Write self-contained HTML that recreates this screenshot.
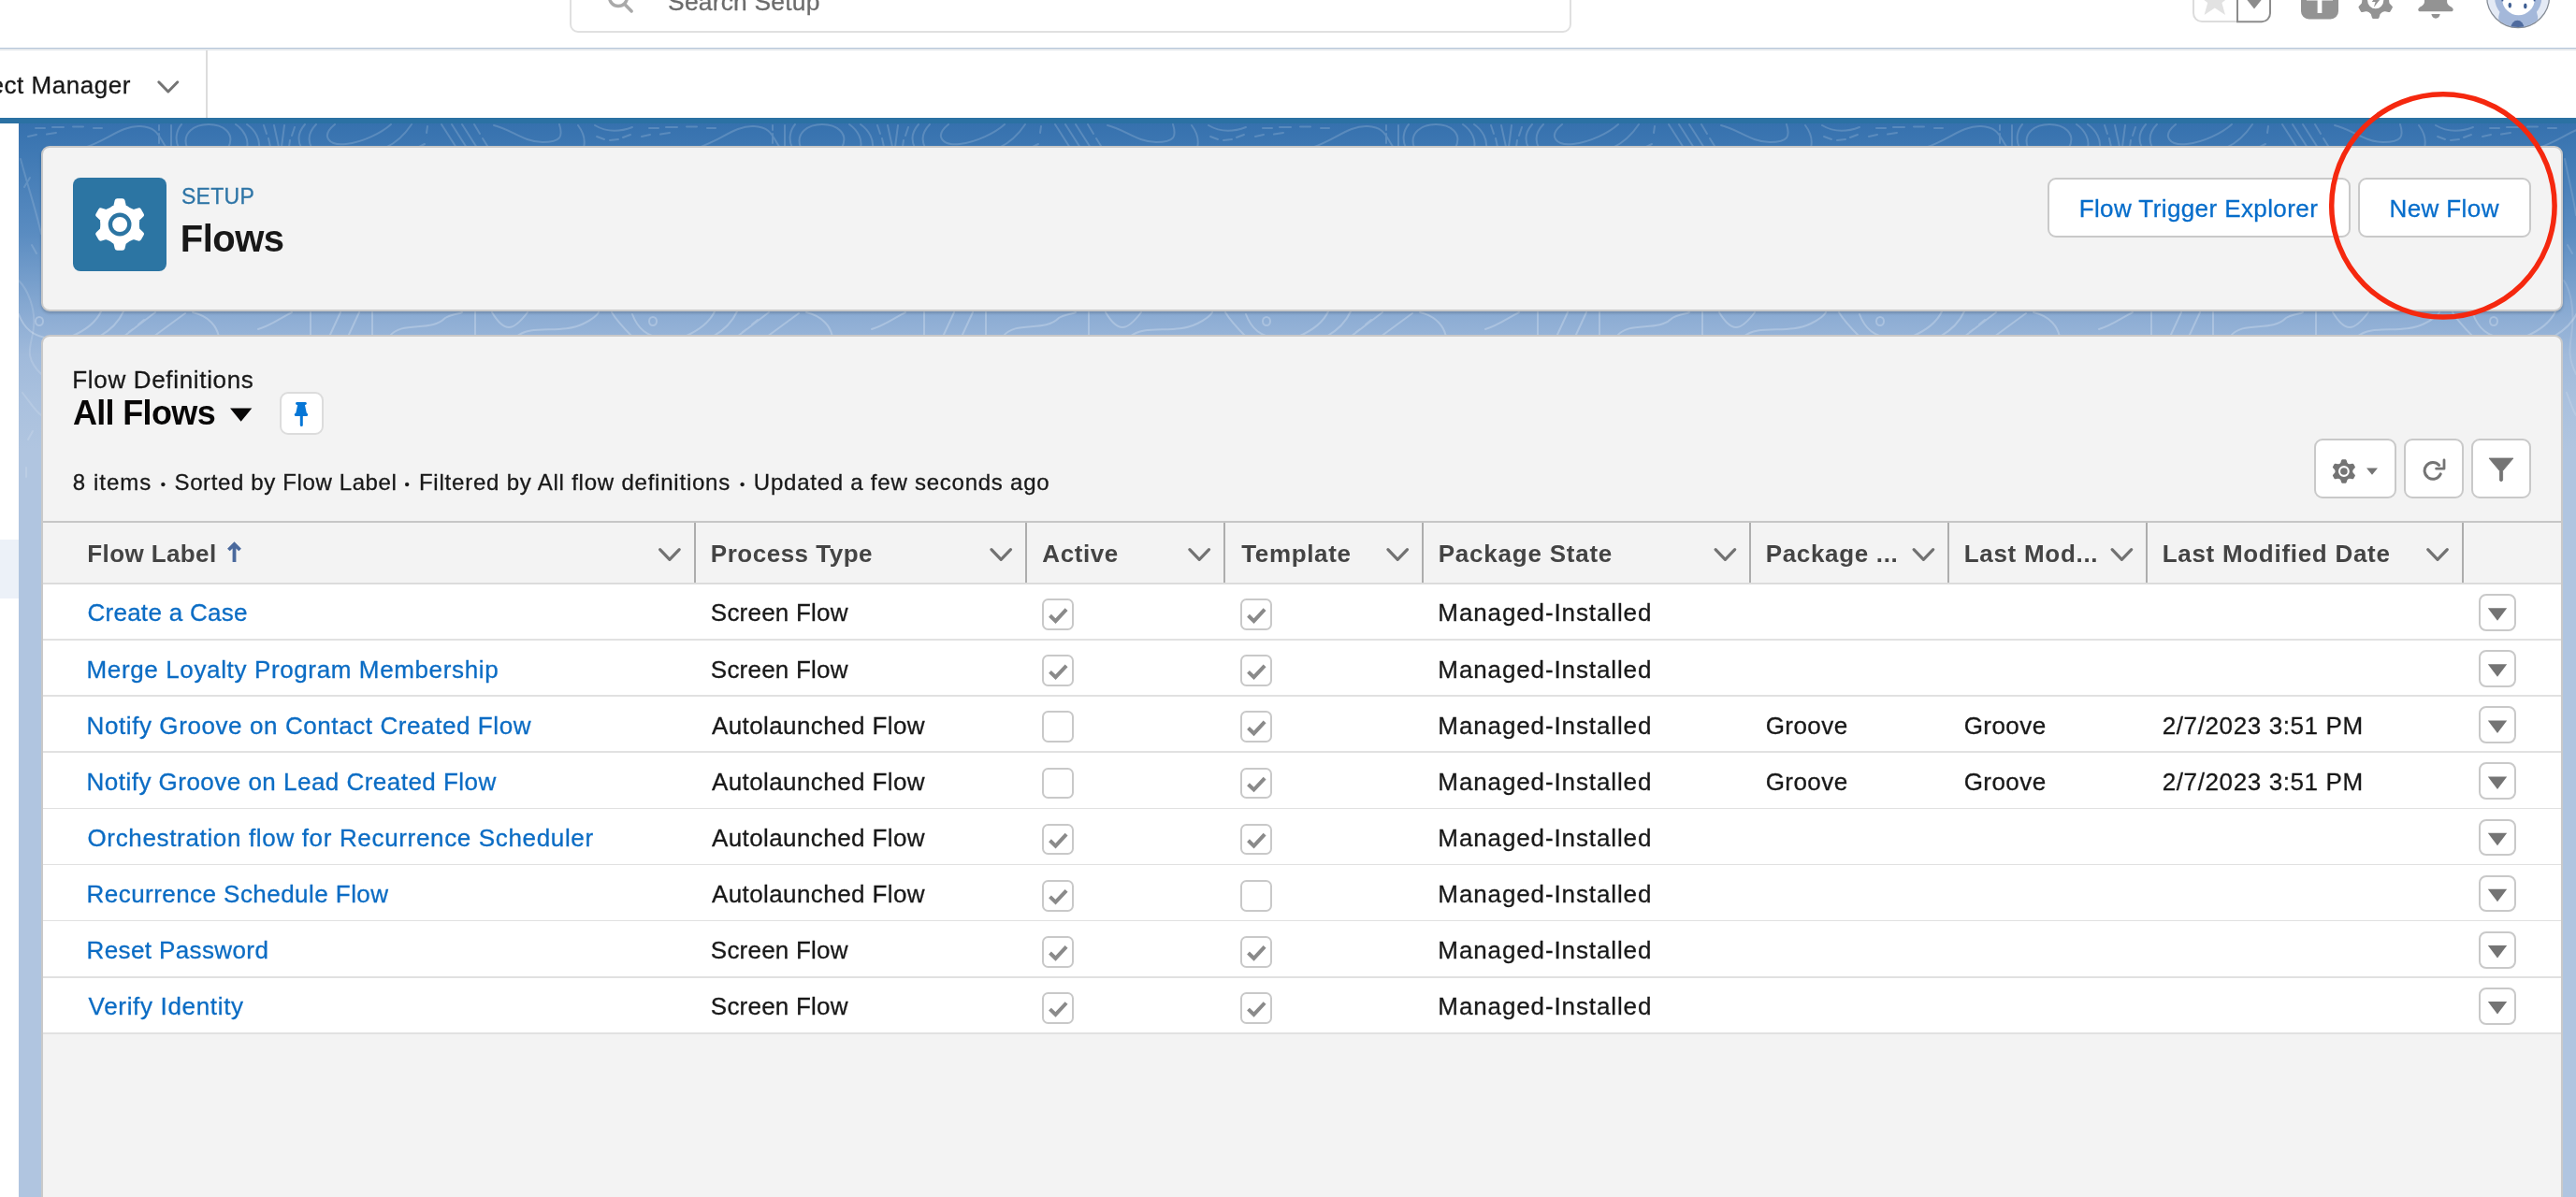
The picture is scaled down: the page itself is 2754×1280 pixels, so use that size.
<!DOCTYPE html>
<html lang="en"><head><meta charset="utf-8"><title>Flows | Salesforce</title>
<style>
html,body{margin:0;padding:0;}
body{width:2754px;height:1280px;overflow:hidden;position:relative;background:#fff;font-family:"Liberation Sans",sans-serif;}
.t{position:absolute;white-space:nowrap;line-height:1;}
.abs{position:absolute;}
svg{position:absolute;left:0;top:0;overflow:visible;}
a{color:inherit;text-decoration:none;}
</style></head><body><div id="root" style="position:absolute;left:0;top:0;width:2754px;height:1280px;will-change:transform;">

<div class="abs" style="left:0;top:126px;width:2754px;height:1154px;background:linear-gradient(to bottom,rgb(54,113,174) 0px,rgb(54,113,174) 6px,rgb(62,120,179) 34px,rgb(90,140,193) 124px,rgb(141,173,212) 214px,rgb(160,186,219) 254px,rgb(170,193,222) 304px,rgb(176,197,224) 354px,rgb(176,197,224) 100%);"></div>
<svg width="2754" height="1280" viewBox="0 0 2754 1280" style="pointer-events:none"><g fill="none" stroke="#fff" stroke-width="2" stroke-linecap="round">
<path d="M38.0,137 h10 M56.0,136 h12 M78.0,135.5 h11 M100.0,137 h9 M30.0,146 l9,-2 M50.0,143.5 l10,-1.5 M90.0,158 C115.0,150 130.0,134 150.0,135 S170.0,148 178.0,158 M170.0,134 v5 M170.0,143 v10 M183.0,134 v24 M191.0,158 C187.0,150 188.0,140 194.0,133 M200.0,158 C194.0,142 208.0,133 223.0,133 S252.0,142 244.0,158 M252.0,133 C262.0,140 266.0,150 264.0,158 M264.0,133 C274.0,140 278.0,150 277.0,158 M282.0,134 l3,9 M287.0,148 l2,9 M293.0,134 l5,23 M304.0,134 l-3,23 M315.0,136 l-3,9 M310.0,150 l-1,7 M326.0,133 C318.0,142 318.0,150 322.0,158 M338.0,133 C329.0,142 329.0,150 333.0,158 M358.0,133 C342.0,146 352.0,156 370.0,154 S408.0,142 418.0,133 M412.0,158 C425.0,152 434.0,142 440.0,133 M446.0,158 l8,-4 M456.0,142 l1,-7 M472.0,133 l16,25 M483.0,133 l16,25 M494.0,133 l16,25 M507.0,133 l6,10 M516.0,148 l5,8 M528.0,134 C546.0,138 560.0,152 580.0,152 S602.0,146 598.0,133 M618.0,134 C624.0,142 626.0,150 624.0,158 M636.0,134 C646.0,140 660.0,142 676.0,136 M638.0,146 l8,3 M652.0,150 l9,-1 M666.0,147 l8,-3" stroke-opacity="0.17"/><path d="M38.0,343.5 a4,4.6 0 1,0 8,0 a4,4.6 0 1,0 -8,0 M20.0,336 C26.0,352 36.0,360 54.0,362 M76.0,360 C94.0,352 104.0,342 108.0,333 M106.0,360 C120.0,352 128.0,342 132.0,333 M132.0,360 L166.0,334 M148.0,347 l6,-5 M138.0,355 l4,-3 M164.0,360 L198.0,335 M206.0,334 C224.0,338 232.0,350 234.0,360 M276.0,352 C290.0,348 300.0,340 312.0,334 M332.0,334 v26 M352.0,360 l12,-26 M372.0,360 l12,-26 M398.0,334 v26 M416.0,360 C430.0,342 460.0,356 476.0,340 C482.0,336 490.0,336 494.0,334 M508.0,334 v26 M526.0,334 C532.0,344 538.0,350 544.0,350 S558.0,342 564.0,334 M552.0,360 C568.0,346 600.0,358 624.0,346 C632.0,342 638.0,338 640.0,334 M654.0,334 C660.0,344 670.0,354 676.0,360" stroke-opacity="0.24"/>
<path d="M694.0,137 h10 M712.0,136 h12 M734.0,135.5 h11 M756.0,137 h9 M686.0,146 l9,-2 M706.0,143.5 l10,-1.5 M746.0,158 C771.0,150 786.0,134 806.0,135 S826.0,148 834.0,158 M826.0,134 v5 M826.0,143 v10 M839.0,134 v24 M847.0,158 C843.0,150 844.0,140 850.0,133 M856.0,158 C850.0,142 864.0,133 879.0,133 S908.0,142 900.0,158 M908.0,133 C918.0,140 922.0,150 920.0,158 M920.0,133 C930.0,140 934.0,150 933.0,158 M938.0,134 l3,9 M943.0,148 l2,9 M949.0,134 l5,23 M960.0,134 l-3,23 M971.0,136 l-3,9 M966.0,150 l-1,7 M982.0,133 C974.0,142 974.0,150 978.0,158 M994.0,133 C985.0,142 985.0,150 989.0,158 M1014.0,133 C998.0,146 1008.0,156 1026.0,154 S1064.0,142 1074.0,133 M1068.0,158 C1081.0,152 1090.0,142 1096.0,133 M1102.0,158 l8,-4 M1112.0,142 l1,-7 M1128.0,133 l16,25 M1139.0,133 l16,25 M1150.0,133 l16,25 M1163.0,133 l6,10 M1172.0,148 l5,8 M1184.0,134 C1202.0,138 1216.0,152 1236.0,152 S1258.0,146 1254.0,133 M1274.0,134 C1280.0,142 1282.0,150 1280.0,158 M1292.0,134 C1302.0,140 1316.0,142 1332.0,136 M1294.0,146 l8,3 M1308.0,150 l9,-1 M1322.0,147 l8,-3" stroke-opacity="0.17"/><path d="M694.0,343.5 a4,4.6 0 1,0 8,0 a4,4.6 0 1,0 -8,0 M676.0,336 C682.0,352 692.0,360 710.0,362 M732.0,360 C750.0,352 760.0,342 764.0,333 M762.0,360 C776.0,352 784.0,342 788.0,333 M788.0,360 L822.0,334 M804.0,347 l6,-5 M794.0,355 l4,-3 M820.0,360 L854.0,335 M862.0,334 C880.0,338 888.0,350 890.0,360 M932.0,352 C946.0,348 956.0,340 968.0,334 M988.0,334 v26 M1008.0,360 l12,-26 M1028.0,360 l12,-26 M1054.0,334 v26 M1072.0,360 C1086.0,342 1116.0,356 1132.0,340 C1138.0,336 1146.0,336 1150.0,334 M1164.0,334 v26 M1182.0,334 C1188.0,344 1194.0,350 1200.0,350 S1214.0,342 1220.0,334 M1208.0,360 C1224.0,346 1256.0,358 1280.0,346 C1288.0,342 1294.0,338 1296.0,334 M1310.0,334 C1316.0,344 1326.0,354 1332.0,360" stroke-opacity="0.24"/>
<path d="M1350.0,137 h10 M1368.0,136 h12 M1390.0,135.5 h11 M1412.0,137 h9 M1342.0,146 l9,-2 M1362.0,143.5 l10,-1.5 M1402.0,158 C1427.0,150 1442.0,134 1462.0,135 S1482.0,148 1490.0,158 M1482.0,134 v5 M1482.0,143 v10 M1495.0,134 v24 M1503.0,158 C1499.0,150 1500.0,140 1506.0,133 M1512.0,158 C1506.0,142 1520.0,133 1535.0,133 S1564.0,142 1556.0,158 M1564.0,133 C1574.0,140 1578.0,150 1576.0,158 M1576.0,133 C1586.0,140 1590.0,150 1589.0,158 M1594.0,134 l3,9 M1599.0,148 l2,9 M1605.0,134 l5,23 M1616.0,134 l-3,23 M1627.0,136 l-3,9 M1622.0,150 l-1,7 M1638.0,133 C1630.0,142 1630.0,150 1634.0,158 M1650.0,133 C1641.0,142 1641.0,150 1645.0,158 M1670.0,133 C1654.0,146 1664.0,156 1682.0,154 S1720.0,142 1730.0,133 M1724.0,158 C1737.0,152 1746.0,142 1752.0,133 M1758.0,158 l8,-4 M1768.0,142 l1,-7 M1784.0,133 l16,25 M1795.0,133 l16,25 M1806.0,133 l16,25 M1819.0,133 l6,10 M1828.0,148 l5,8 M1840.0,134 C1858.0,138 1872.0,152 1892.0,152 S1914.0,146 1910.0,133 M1930.0,134 C1936.0,142 1938.0,150 1936.0,158 M1948.0,134 C1958.0,140 1972.0,142 1988.0,136 M1950.0,146 l8,3 M1964.0,150 l9,-1 M1978.0,147 l8,-3" stroke-opacity="0.17"/><path d="M1350.0,343.5 a4,4.6 0 1,0 8,0 a4,4.6 0 1,0 -8,0 M1332.0,336 C1338.0,352 1348.0,360 1366.0,362 M1388.0,360 C1406.0,352 1416.0,342 1420.0,333 M1418.0,360 C1432.0,352 1440.0,342 1444.0,333 M1444.0,360 L1478.0,334 M1460.0,347 l6,-5 M1450.0,355 l4,-3 M1476.0,360 L1510.0,335 M1518.0,334 C1536.0,338 1544.0,350 1546.0,360 M1588.0,352 C1602.0,348 1612.0,340 1624.0,334 M1644.0,334 v26 M1664.0,360 l12,-26 M1684.0,360 l12,-26 M1710.0,334 v26 M1728.0,360 C1742.0,342 1772.0,356 1788.0,340 C1794.0,336 1802.0,336 1806.0,334 M1820.0,334 v26 M1838.0,334 C1844.0,344 1850.0,350 1856.0,350 S1870.0,342 1876.0,334 M1864.0,360 C1880.0,346 1912.0,358 1936.0,346 C1944.0,342 1950.0,338 1952.0,334 M1966.0,334 C1972.0,344 1982.0,354 1988.0,360" stroke-opacity="0.24"/>
<path d="M2006.0,137 h10 M2024.0,136 h12 M2046.0,135.5 h11 M2068.0,137 h9 M1998.0,146 l9,-2 M2018.0,143.5 l10,-1.5 M2058.0,158 C2083.0,150 2098.0,134 2118.0,135 S2138.0,148 2146.0,158 M2138.0,134 v5 M2138.0,143 v10 M2151.0,134 v24 M2159.0,158 C2155.0,150 2156.0,140 2162.0,133 M2168.0,158 C2162.0,142 2176.0,133 2191.0,133 S2220.0,142 2212.0,158 M2220.0,133 C2230.0,140 2234.0,150 2232.0,158 M2232.0,133 C2242.0,140 2246.0,150 2245.0,158 M2250.0,134 l3,9 M2255.0,148 l2,9 M2261.0,134 l5,23 M2272.0,134 l-3,23 M2283.0,136 l-3,9 M2278.0,150 l-1,7 M2294.0,133 C2286.0,142 2286.0,150 2290.0,158 M2306.0,133 C2297.0,142 2297.0,150 2301.0,158 M2326.0,133 C2310.0,146 2320.0,156 2338.0,154 S2376.0,142 2386.0,133 M2380.0,158 C2393.0,152 2402.0,142 2408.0,133 M2414.0,158 l8,-4 M2424.0,142 l1,-7 M2440.0,133 l16,25 M2451.0,133 l16,25 M2462.0,133 l16,25 M2475.0,133 l6,10 M2484.0,148 l5,8 M2496.0,134 C2514.0,138 2528.0,152 2548.0,152 S2570.0,146 2566.0,133 M2586.0,134 C2592.0,142 2594.0,150 2592.0,158 M2604.0,134 C2614.0,140 2628.0,142 2644.0,136 M2606.0,146 l8,3 M2620.0,150 l9,-1 M2634.0,147 l8,-3" stroke-opacity="0.17"/><path d="M2006.0,343.5 a4,4.6 0 1,0 8,0 a4,4.6 0 1,0 -8,0 M1988.0,336 C1994.0,352 2004.0,360 2022.0,362 M2044.0,360 C2062.0,352 2072.0,342 2076.0,333 M2074.0,360 C2088.0,352 2096.0,342 2100.0,333 M2100.0,360 L2134.0,334 M2116.0,347 l6,-5 M2106.0,355 l4,-3 M2132.0,360 L2166.0,335 M2174.0,334 C2192.0,338 2200.0,350 2202.0,360 M2244.0,352 C2258.0,348 2268.0,340 2280.0,334 M2300.0,334 v26 M2320.0,360 l12,-26 M2340.0,360 l12,-26 M2366.0,334 v26 M2384.0,360 C2398.0,342 2428.0,356 2444.0,340 C2450.0,336 2458.0,336 2462.0,334 M2476.0,334 v26 M2494.0,334 C2500.0,344 2506.0,350 2512.0,350 S2526.0,342 2532.0,334 M2520.0,360 C2536.0,346 2568.0,358 2592.0,346 C2600.0,342 2606.0,338 2608.0,334 M2622.0,334 C2628.0,344 2638.0,354 2644.0,360" stroke-opacity="0.24"/>
<path d="M2662.0,137 h10 M2680.0,136 h12 M2702.0,135.5 h11 M2724.0,137 h9 M2654.0,146 l9,-2 M2674.0,143.5 l10,-1.5 M2714.0,158 C2739.0,150 2754.0,134 2774.0,135 S2794.0,148 2802.0,158 M2794.0,134 v5 M2794.0,143 v10 M2807.0,134 v24 M2815.0,158 C2811.0,150 2812.0,140 2818.0,133 M2824.0,158 C2818.0,142 2832.0,133 2847.0,133 S2876.0,142 2868.0,158 M2876.0,133 C2886.0,140 2890.0,150 2888.0,158 M2888.0,133 C2898.0,140 2902.0,150 2901.0,158 M2906.0,134 l3,9 M2911.0,148 l2,9 M2917.0,134 l5,23 M2928.0,134 l-3,23 M2939.0,136 l-3,9 M2934.0,150 l-1,7 M2950.0,133 C2942.0,142 2942.0,150 2946.0,158 M2962.0,133 C2953.0,142 2953.0,150 2957.0,158 M2982.0,133 C2966.0,146 2976.0,156 2994.0,154 S3032.0,142 3042.0,133 M3036.0,158 C3049.0,152 3058.0,142 3064.0,133 M3070.0,158 l8,-4 M3080.0,142 l1,-7 M3096.0,133 l16,25 M3107.0,133 l16,25 M3118.0,133 l16,25 M3131.0,133 l6,10 M3140.0,148 l5,8 M3152.0,134 C3170.0,138 3184.0,152 3204.0,152 S3226.0,146 3222.0,133 M3242.0,134 C3248.0,142 3250.0,150 3248.0,158 M3260.0,134 C3270.0,140 3284.0,142 3300.0,136 M3262.0,146 l8,3 M3276.0,150 l9,-1 M3290.0,147 l8,-3" stroke-opacity="0.17"/><path d="M2662.0,343.5 a4,4.6 0 1,0 8,0 a4,4.6 0 1,0 -8,0 M2644.0,336 C2650.0,352 2660.0,360 2678.0,362 M2700.0,360 C2718.0,352 2728.0,342 2732.0,333 M2730.0,360 C2744.0,352 2752.0,342 2756.0,333 M2756.0,360 L2790.0,334 M2772.0,347 l6,-5 M2762.0,355 l4,-3 M2788.0,360 L2822.0,335 M2830.0,334 C2848.0,338 2856.0,350 2858.0,360 M2900.0,352 C2914.0,348 2924.0,340 2936.0,334 M2956.0,334 v26 M2976.0,360 l12,-26 M2996.0,360 l12,-26 M3022.0,334 v26 M3040.0,360 C3054.0,342 3084.0,356 3100.0,340 C3106.0,336 3114.0,336 3118.0,334 M3132.0,334 v26 M3150.0,334 C3156.0,344 3162.0,350 3168.0,350 S3182.0,342 3188.0,334 M3176.0,360 C3192.0,346 3224.0,358 3248.0,346 C3256.0,342 3262.0,338 3264.0,334 M3278.0,334 C3284.0,344 3294.0,354 3300.0,360" stroke-opacity="0.24"/>
<path d="M22,170 C30,200 40,230 44,250 M20,300 C30,310 38,330 36,350 S24,380 44,400 M26,200 l6,-10 M34,262 l5,9 M24,420 C32,430 38,440 44,444 M30,470 l5,-9 M28,500 v10" stroke-opacity="0.14"/>
<path d="M2742,170 C2748,200 2752,215 2754,230 M2741,300 C2748,310 2752,330 2750,350 S2744,380 2754,400 M2745,262 l5,9 M2744,420 C2748,430 2751,440 2754,444" stroke-opacity="0.14"/>
</g></svg>
<div class="" style="position:absolute;left:0.00px;top:126.00px;width:2754.00px;height:6.00px;background:#2b71a3;"></div>
<div class="" style="position:absolute;left:0.00px;top:132.00px;width:20.30px;height:1148.00px;background:#fff;"></div>
<div class="" style="position:absolute;left:0.00px;top:577.00px;width:20.30px;height:62.50px;background:#ecf1f8;"></div>
<div class="" style="position:absolute;left:0.00px;top:0.00px;width:2754.00px;height:51.00px;background:#fff;"></div>
<div class="" style="position:absolute;left:608.70px;top:-40.00px;width:1071.10px;height:75.20px;box-sizing:border-box;border:2px solid #e0e0e0;border-radius:9px;background:#fff;"></div>
<svg width="2754" height="60" viewBox="0 0 2754 60"><g fill="none" stroke="#a9a9a9" stroke-width="3.4" stroke-linecap="round"><circle cx="661" cy="-3" r="9.5"/><path d="M667.6,4.2 L675.2,12"/></g></svg>
<div class="t " style="left:714.10px;top:-11.35px;font-size:26.4px;color:#6c6c6c;-webkit-text-stroke:0.3px;letter-spacing:0.212px;">Search Setup</div>
<div class="" style="position:absolute;left:0.00px;top:50.70px;width:2754.00px;height:1.50px;background:#b3c5d8;"></div>
<div class="" style="position:absolute;left:0.00px;top:52.20px;width:2754.00px;height:1.60px;background:#e4e8ec;"></div>
<svg width="2754" height="60" viewBox="0 0 2754 60">
<path d="M2345,-10 V14 a9,9 0 0 0 9,9 H2392" fill="none" stroke="#dcdcdc" stroke-width="2"/>
<path d="M2392,-10 V23.3 H2418 a9,9 0 0 0 9,-9 V-10" fill="#fff" stroke="#8c8c8c" stroke-width="2"/>
<path d="M2367.8,-18.4 L2363.1,-5.9 L2349.7,-5.3 L2360.2,3.1 L2356.6,16.0 L2367.8,8.6 L2379.0,16.0 L2375.4,3.1 L2385.9,-5.3 L2372.5,-5.9Z" fill="#e2e2e2"/>
<path d="M2400,-3 H2420 L2410,9.5 Z" fill="#8c8c8c"/>
<path d="M2460,-20 V12 a8.5,8.5 0 0 0 8.5,8.5 H2491.5 a8.5,8.5 0 0 0 8.5,-8.5 V-20Z" fill="#939393"/>
<path d="M2477.6,-10 h4.8 v24 h-4.8z" fill="#fff"/><path d="M2466,-4 h28 v4.5 h-28z" fill="#fff"/>
<path d="M2536.33,-12.78 L2537.60,-17.08 L2541.80,-17.08 L2543.07,-12.78 Q2545.66,-9.73 2549.61,-9.01 L2553.96,-10.05 L2556.06,-6.42 L2552.97,-3.18 Q2551.63,0.60 2552.97,4.38 L2556.06,7.62 L2553.96,11.25 L2549.61,10.21 Q2545.66,10.93 2543.07,13.98 L2541.80,18.28 L2537.60,18.28 L2536.33,13.98 Q2533.74,10.93 2529.79,10.21 L2525.44,11.25 L2523.34,7.62 L2526.43,4.38 Q2527.77,0.60 2526.43,-3.18 L2523.34,-6.42 L2525.44,-10.05 L2529.79,-9.01 Q2533.74,-9.73 2536.33,-12.78Z" fill="#939393" stroke="#939393" stroke-width="3.6" stroke-linejoin="round"/><circle cx="2539.7" cy="0.6" r="8.6" fill="#fff"/>
<path d="M2542,-7 L2535.8,2 H2539.6 L2537.8,8 L2544.4,-0.5 H2540.6Z" fill="#939393"/>
<path d="M2592,-12 V1.5 C2592,5.6 2588.4,6.6 2586.4,8.2 C2584.4,9.8 2585.2,12.3 2587.6,12.3 H2620.4 C2622.8,12.3 2623.6,9.8 2621.6,8.2 C2619.6,6.6 2616.1,5.6 2616.1,1.5 V-12Z" fill="#939393"/>
<path d="M2599.4,15.1 H2608.7 C2608.2,18 2606.3,19.7 2604,19.7 C2601.7,19.7 2599.9,18 2599.4,15.1Z" fill="#939393"/>
<defs><clipPath id="av"><circle cx="2692.1" cy="-4" r="33"/></clipPath></defs>
<circle cx="2692.1" cy="-4" r="33.5" fill="#e4eaf5" stroke="#858c96" stroke-width="1.3"/>
<g clip-path="url(#av)"><circle cx="2692.2" cy="-3" r="25.2" fill="#a4b8da"/><path d="M2673.5,9 L2671.2,18 L2672,31 H2712.4 L2713.2,18 L2711,9Z" fill="#a4b8da"/>
<ellipse cx="2692.5" cy="-1.2" rx="17.4" ry="17.4" fill="#fff"/>
<path d="M2675.2,1.4 A17.4,17.4 0 0 1 2709.8,1.4" fill="none" stroke="#3f5c92" stroke-width="1.8"/>
<ellipse cx="2683.3" cy="5.6" rx="1.75" ry="2.8" fill="#3f5f93"/><ellipse cx="2699.8" cy="6.4" rx="1.75" ry="2.8" fill="#3f5f93"/>
<ellipse cx="2691.4" cy="30" rx="7" ry="8.3" fill="#4f6b9e"/></g>
</svg>
<div class="" style="position:absolute;left:0.00px;top:53.80px;width:2754.00px;height:72.20px;background:#fff;"></div>
<div class="t" style="left:-52.59px;top:77.59px;font-size:26px;color:#181818;letter-spacing:0.541px;-webkit-text-stroke:0.3px;">Object Manager</div>
<svg width="2754" height="130" viewBox="0 0 2754 130"><path d="M169.8,87.8 L179.8,98 L189.8,87.8" fill="none" stroke="#747474" stroke-width="3" stroke-linecap="round" stroke-linejoin="round"/></svg>
<div class="" style="position:absolute;left:220.30px;top:53.80px;width:1.50px;height:72.20px;background:#dcdcdc;"></div>
<div class="" style="position:absolute;left:44.20px;top:156.30px;width:2696.00px;height:176.90px;box-sizing:border-box;background:#f3f3f3;border:2px solid #c9c9c9;border-radius:9px;box-shadow:0 2px 3px rgba(0,0,0,0.18);"></div>
<div class="" style="position:absolute;left:78.10px;top:190.10px;width:100.00px;height:100.00px;background:#2c75a3;border-radius:8px;"></div>
<svg width="2754" height="1280" viewBox="0 0 2754 1280"><path d="M124.03,220.83 L125.41,214.94 L130.79,214.94 L132.17,220.83 Q136.78,224.97 142.67,226.89 L148.45,225.14 L151.15,229.81 L146.74,233.94 Q145.46,240.00 146.74,246.06 L151.15,250.19 L148.45,254.86 L142.67,253.11 Q136.78,255.03 132.17,259.17 L130.79,265.06 L125.41,265.06 L124.03,259.17 Q119.42,255.03 113.53,253.11 L107.75,254.86 L105.05,250.19 L109.46,246.06 Q110.74,240.00 109.46,233.94 L105.05,229.81 L107.75,225.14 L113.53,226.89 Q119.42,224.97 124.03,220.83Z" fill="#fff" stroke="#fff" stroke-width="5.6" stroke-linejoin="round"/><circle cx="128.1" cy="240" r="10.2" fill="none" stroke="#2c75a3" stroke-width="4.4"/></svg>
<div class="t " style="left:193.96px;top:199.03px;font-size:23px;color:#2d74a6;-webkit-text-stroke:0.3px;letter-spacing:0.294px;">SETUP</div>
<div class="t " style="left:192.72px;top:235.14px;font-size:40px;color:#181818;font-weight:bold;letter-spacing:-0.506px;">Flows</div>
<div class="" style="position:absolute;left:2188.70px;top:190.00px;width:324.10px;height:64.00px;box-sizing:border-box;background:#fff;border:2px solid #c9c9c9;border-radius:9px;"></div>
<div class="" style="position:absolute;left:2520.70px;top:190.00px;width:185.40px;height:64.00px;box-sizing:border-box;background:#fff;border:2px solid #c9c9c9;border-radius:9px;"></div>
<div class="t " style="left:2222.67px;top:209.79px;font-size:26px;color:#066dcb;-webkit-text-stroke:0.3px;letter-spacing:0.403px;">Flow Trigger Explorer</div>
<div class="t " style="left:2554.47px;top:209.79px;font-size:26px;color:#066dcb;-webkit-text-stroke:0.3px;letter-spacing:0.405px;">New Flow</div>
<div class="" style="position:absolute;left:44.20px;top:358.20px;width:2696.00px;height:941.80px;box-sizing:border-box;background:#f3f3f3;border:2px solid #c9c9c9;border-radius:9px;"></div>
<div class="t " style="left:77.27px;top:392.69px;font-size:26px;color:#181818;-webkit-text-stroke:0.3px;letter-spacing:0.671px;">Flow Definitions</div>
<div class="t " style="left:77.90px;top:423.53px;font-size:36px;color:#080707;font-weight:bold;letter-spacing:-0.655px;">All Flows</div>
<svg width="2754" height="1280" viewBox="0 0 2754 1280">
<path d="M246,436.5 H269.3 L257.65,450.8Z" fill="#080707"/>
</svg>
<div class="" style="position:absolute;left:298.60px;top:418.50px;width:47.00px;height:46.60px;box-sizing:border-box;background:#fff;border:2px solid #dcdcdc;border-radius:9px;"></div>
<svg width="2754" height="1280" viewBox="0 0 2754 1280"><g fill="#0676d6">
<rect x="316.1" y="430" width="11.7" height="3" rx="1.4"/>
<path d="M318.3,432.4 H325.8 L328,442.4 H316.1Z"/>
<rect x="314.8" y="441.8" width="14.3" height="3.1" rx="1.5"/>
<rect x="320.8" y="444" width="3" height="11.9" rx="1.5"/>
</g></svg>
<div class="t " style="left:77.86px;top:503.88px;font-size:24px;color:#181818;-webkit-text-stroke:0.3px;letter-spacing:1.026px;">8 items</div>
<div class="t " style="left:186.51px;top:503.88px;font-size:24px;color:#181818;-webkit-text-stroke:0.3px;letter-spacing:0.628px;">Sorted by Flow Label</div>
<div class="t " style="left:447.93px;top:503.88px;font-size:24px;color:#181818;-webkit-text-stroke:0.3px;letter-spacing:0.780px;">Filtered by All flow definitions</div>
<div class="t " style="left:805.85px;top:503.88px;font-size:24px;color:#181818;-webkit-text-stroke:0.3px;letter-spacing:0.759px;">Updated a few seconds ago</div>
<div class="t " style="left:171.71px;top:509.90px;font-size:15px;color:#181818;-webkit-text-stroke:0.3px;">•</div>
<div class="t " style="left:432.61px;top:509.90px;font-size:15px;color:#181818;-webkit-text-stroke:0.3px;">•</div>
<div class="t " style="left:790.91px;top:509.90px;font-size:15px;color:#181818;-webkit-text-stroke:0.3px;">•</div>
<div class="" style="position:absolute;left:2473.90px;top:468.90px;width:88.10px;height:64.20px;box-sizing:border-box;background:#fff;border:2px solid #c9c9c9;border-radius:9px;"></div>
<div class="" style="position:absolute;left:2569.90px;top:468.90px;width:63.70px;height:64.20px;box-sizing:border-box;background:#fff;border:2px solid #c9c9c9;border-radius:9px;"></div>
<div class="" style="position:absolute;left:2641.60px;top:468.90px;width:64.60px;height:64.20px;box-sizing:border-box;background:#fff;border:2px solid #c9c9c9;border-radius:9px;"></div>
<svg width="2754" height="1280" viewBox="0 0 2754 1280">
<path d="M2503.43,495.24 L2504.40,492.40 L2507.40,492.40 L2508.37,495.24 Q2509.59,497.61 2512.25,497.48 L2515.20,496.90 L2516.70,499.49 L2514.72,501.76 Q2513.28,504.00 2514.72,506.24 L2516.70,508.51 L2515.20,511.10 L2512.25,510.52 Q2509.59,510.39 2508.37,512.76 L2507.40,515.60 L2504.40,515.60 L2503.43,512.76 Q2502.21,510.39 2499.55,510.52 L2496.60,511.10 L2495.10,508.51 L2497.08,506.24 Q2498.52,504.00 2497.08,501.76 L2495.10,499.49 L2496.60,496.90 L2499.55,497.48 Q2502.21,497.61 2503.43,495.24Z" fill="#747474" stroke="#747474" stroke-width="2.4" stroke-linejoin="round"/><circle cx="2505.9" cy="504" r="4.85" fill="none" stroke="#fff" stroke-width="2.1"/>
<path d="M2530,500.4 H2542 L2536,507.8Z" fill="#747474"/>
<path d="M2607.6,497.4 A8.9,8.9 0 1 0 2609.2,506.9" fill="none" stroke="#747474" stroke-width="3" stroke-linecap="round"/>
<path d="M2613,492 V501.2 H2604.6" fill="none" stroke="#747474" stroke-width="2.8" stroke-linecap="round" stroke-linejoin="round"/>
<path d="M2661,490 H2687 L2675.6,503.6 V513 a1.6,1.6 0 0 1 -3.2,0 V503.6Z" fill="#747474" stroke="#747474" stroke-width="0.8" stroke-linejoin="round"/>
</svg>
<div class="" style="position:absolute;left:46.20px;top:557.00px;width:2692.00px;height:2.00px;background:#c6c6c6;"></div>
<div class="" style="position:absolute;left:46.20px;top:559.00px;width:2692.00px;height:64.40px;background:#f3f3f3;"></div>
<div class="" style="position:absolute;left:46.20px;top:623.40px;width:2692.00px;height:481.28px;background:#fff;"></div>
<div class="" style="position:absolute;left:46.20px;top:623.30px;width:2692.00px;height:1.70px;background:#dcdcdc;"></div>
<div class="" style="position:absolute;left:46.20px;top:683.36px;width:2692.00px;height:1.80px;background:#e1e1e1;"></div>
<div class="" style="position:absolute;left:46.20px;top:743.42px;width:2692.00px;height:1.80px;background:#e1e1e1;"></div>
<div class="" style="position:absolute;left:46.20px;top:803.48px;width:2692.00px;height:1.80px;background:#e1e1e1;"></div>
<div class="" style="position:absolute;left:46.20px;top:863.54px;width:2692.00px;height:1.80px;background:#e1e1e1;"></div>
<div class="" style="position:absolute;left:46.20px;top:923.60px;width:2692.00px;height:1.80px;background:#e1e1e1;"></div>
<div class="" style="position:absolute;left:46.20px;top:983.66px;width:2692.00px;height:1.80px;background:#e1e1e1;"></div>
<div class="" style="position:absolute;left:46.20px;top:1043.72px;width:2692.00px;height:1.80px;background:#e1e1e1;"></div>
<div class="" style="position:absolute;left:46.20px;top:1103.78px;width:2692.00px;height:1.80px;background:#e1e1e1;"></div>
<div class="" style="position:absolute;left:741.80px;top:559.00px;width:1.80px;height:64.00px;background:#adadad;"></div>
<div class="" style="position:absolute;left:1096.10px;top:559.00px;width:1.80px;height:64.00px;background:#adadad;"></div>
<div class="" style="position:absolute;left:1308.10px;top:559.00px;width:1.80px;height:64.00px;background:#adadad;"></div>
<div class="" style="position:absolute;left:1520.10px;top:559.00px;width:1.80px;height:64.00px;background:#adadad;"></div>
<div class="" style="position:absolute;left:1870.30px;top:559.00px;width:1.80px;height:64.00px;background:#adadad;"></div>
<div class="" style="position:absolute;left:2082.30px;top:559.00px;width:1.80px;height:64.00px;background:#adadad;"></div>
<div class="" style="position:absolute;left:2294.30px;top:559.00px;width:1.80px;height:64.00px;background:#adadad;"></div>
<div class="" style="position:absolute;left:2631.90px;top:559.00px;width:1.80px;height:64.00px;background:#adadad;"></div>
<div class="t " style="left:93.36px;top:578.69px;font-size:26px;color:#444444;font-weight:bold;letter-spacing:0.382px;">Flow Label</div>
<div class="t " style="left:759.86px;top:578.69px;font-size:26px;color:#444444;font-weight:bold;letter-spacing:0.504px;">Process Type</div>
<div class="t " style="left:1114.35px;top:578.69px;font-size:26px;color:#444444;font-weight:bold;letter-spacing:0.560px;">Active</div>
<div class="t " style="left:1327.21px;top:578.69px;font-size:26px;color:#444444;font-weight:bold;letter-spacing:0.648px;">Template</div>
<div class="t " style="left:1537.76px;top:578.69px;font-size:26px;color:#444444;font-weight:bold;letter-spacing:0.767px;">Package State</div>
<div class="t " style="left:1887.76px;top:578.69px;font-size:26px;color:#444444;font-weight:bold;letter-spacing:0.661px;">Package ...</div>
<div class="t " style="left:2099.66px;top:578.69px;font-size:26px;color:#444444;font-weight:bold;letter-spacing:0.715px;">Last Mod...</div>
<div class="t " style="left:2311.66px;top:578.69px;font-size:26px;color:#444444;font-weight:bold;letter-spacing:0.712px;">Last Modified Date</div>
<svg width="2754" height="1280" viewBox="0 0 2754 1280">
<path d="M250.5,600.9 V583 M244.4,588.0 L250.5,581.9 L256.6,588.0" fill="none" stroke="#4a699d" stroke-width="3.8" stroke-linecap="butt" stroke-linejoin="miter"/>
<path d="M705.6,587.6 L715.9,598.4 L726.2,587.6" fill="none" stroke="#727272" stroke-width="3.2" stroke-linecap="round" stroke-linejoin="round"/>
<path d="M1059.9,587.6 L1070.2,598.4 L1080.5,587.6" fill="none" stroke="#727272" stroke-width="3.2" stroke-linecap="round" stroke-linejoin="round"/>
<path d="M1271.9,587.6 L1282.2,598.4 L1292.5,587.6" fill="none" stroke="#727272" stroke-width="3.2" stroke-linecap="round" stroke-linejoin="round"/>
<path d="M1483.9,587.6 L1494.2,598.4 L1504.5,587.6" fill="none" stroke="#727272" stroke-width="3.2" stroke-linecap="round" stroke-linejoin="round"/>
<path d="M1834.1,587.6 L1844.4,598.4 L1854.7,587.6" fill="none" stroke="#727272" stroke-width="3.2" stroke-linecap="round" stroke-linejoin="round"/>
<path d="M2046.1,587.6 L2056.4,598.4 L2066.7,587.6" fill="none" stroke="#727272" stroke-width="3.2" stroke-linecap="round" stroke-linejoin="round"/>
<path d="M2258.1,587.6 L2268.4,598.4 L2278.7,587.6" fill="none" stroke="#727272" stroke-width="3.2" stroke-linecap="round" stroke-linejoin="round"/>
<path d="M2595.7,587.6 L2606.0,598.4 L2616.3,587.6" fill="none" stroke="#727272" stroke-width="3.2" stroke-linecap="round" stroke-linejoin="round"/>
</svg>
<div class="t " style="left:93.38px;top:642.49px;font-size:26px;color:#0b6cc4;-webkit-text-stroke:0.3px;letter-spacing:0.286px;">Create a Case</div>
<div class="t " style="left:759.82px;top:642.49px;font-size:26px;color:#181818;-webkit-text-stroke:0.3px;letter-spacing:0.222px;">Screen Flow</div>
<div class="t " style="left:1537.37px;top:642.49px;font-size:26px;color:#181818;-webkit-text-stroke:0.3px;letter-spacing:0.881px;">Managed-Installed</div>
<div class="" style="position:absolute;left:1113.90px;top:640.20px;width:34.00px;height:33.80px;box-sizing:border-box;background:#fff;border:2px solid #c9c9c9;border-radius:6.5px;"></div>
<div class="" style="position:absolute;left:1325.90px;top:640.20px;width:34.00px;height:33.80px;box-sizing:border-box;background:#fff;border:2px solid #c9c9c9;border-radius:6.5px;"></div>
<div class="" style="position:absolute;left:2650.30px;top:635.10px;width:39.80px;height:39.70px;box-sizing:border-box;background:#fff;border:2px solid #c9c9c9;border-radius:8px;"></div>
<div class="t " style="left:92.57px;top:702.61px;font-size:26px;color:#0b6cc4;-webkit-text-stroke:0.3px;letter-spacing:0.630px;">Merge Loyalty Program Membership</div>
<div class="t " style="left:759.82px;top:702.61px;font-size:26px;color:#181818;-webkit-text-stroke:0.3px;letter-spacing:0.222px;">Screen Flow</div>
<div class="t " style="left:1537.37px;top:702.61px;font-size:26px;color:#181818;-webkit-text-stroke:0.3px;letter-spacing:0.881px;">Managed-Installed</div>
<div class="" style="position:absolute;left:1113.90px;top:700.32px;width:34.00px;height:33.80px;box-sizing:border-box;background:#fff;border:2px solid #c9c9c9;border-radius:6.5px;"></div>
<div class="" style="position:absolute;left:1325.90px;top:700.32px;width:34.00px;height:33.80px;box-sizing:border-box;background:#fff;border:2px solid #c9c9c9;border-radius:6.5px;"></div>
<div class="" style="position:absolute;left:2650.30px;top:695.22px;width:39.80px;height:39.70px;box-sizing:border-box;background:#fff;border:2px solid #c9c9c9;border-radius:8px;"></div>
<div class="t " style="left:92.57px;top:762.73px;font-size:26px;color:#0b6cc4;-webkit-text-stroke:0.3px;letter-spacing:0.589px;">Notify Groove on Contact Created Flow</div>
<div class="t " style="left:760.95px;top:762.73px;font-size:26px;color:#181818;-webkit-text-stroke:0.3px;letter-spacing:0.409px;">Autolaunched Flow</div>
<div class="t " style="left:1537.37px;top:762.73px;font-size:26px;color:#181818;-webkit-text-stroke:0.3px;letter-spacing:0.881px;">Managed-Installed</div>
<div class="t " style="left:1887.69px;top:762.73px;font-size:26px;color:#181818;-webkit-text-stroke:0.3px;letter-spacing:0.440px;">Groove</div>
<div class="t " style="left:2099.69px;top:762.73px;font-size:26px;color:#181818;-webkit-text-stroke:0.3px;letter-spacing:0.440px;">Groove</div>
<div class="t " style="left:2311.69px;top:762.73px;font-size:26px;color:#181818;-webkit-text-stroke:0.3px;letter-spacing:0.612px;">2/7/2023 3:51 PM</div>
<div class="" style="position:absolute;left:1113.90px;top:760.44px;width:34.00px;height:33.80px;box-sizing:border-box;background:#fff;border:2px solid #c9c9c9;border-radius:6.5px;"></div>
<div class="" style="position:absolute;left:1325.90px;top:760.44px;width:34.00px;height:33.80px;box-sizing:border-box;background:#fff;border:2px solid #c9c9c9;border-radius:6.5px;"></div>
<div class="" style="position:absolute;left:2650.30px;top:755.34px;width:39.80px;height:39.70px;box-sizing:border-box;background:#fff;border:2px solid #c9c9c9;border-radius:8px;"></div>
<div class="t " style="left:92.57px;top:822.85px;font-size:26px;color:#0b6cc4;-webkit-text-stroke:0.3px;letter-spacing:0.478px;">Notify Groove on Lead Created Flow</div>
<div class="t " style="left:760.95px;top:822.85px;font-size:26px;color:#181818;-webkit-text-stroke:0.3px;letter-spacing:0.409px;">Autolaunched Flow</div>
<div class="t " style="left:1537.37px;top:822.85px;font-size:26px;color:#181818;-webkit-text-stroke:0.3px;letter-spacing:0.881px;">Managed-Installed</div>
<div class="t " style="left:1887.69px;top:822.85px;font-size:26px;color:#181818;-webkit-text-stroke:0.3px;letter-spacing:0.440px;">Groove</div>
<div class="t " style="left:2099.69px;top:822.85px;font-size:26px;color:#181818;-webkit-text-stroke:0.3px;letter-spacing:0.440px;">Groove</div>
<div class="t " style="left:2311.69px;top:822.85px;font-size:26px;color:#181818;-webkit-text-stroke:0.3px;letter-spacing:0.612px;">2/7/2023 3:51 PM</div>
<div class="" style="position:absolute;left:1113.90px;top:820.56px;width:34.00px;height:33.80px;box-sizing:border-box;background:#fff;border:2px solid #c9c9c9;border-radius:6.5px;"></div>
<div class="" style="position:absolute;left:1325.90px;top:820.56px;width:34.00px;height:33.80px;box-sizing:border-box;background:#fff;border:2px solid #c9c9c9;border-radius:6.5px;"></div>
<div class="" style="position:absolute;left:2650.30px;top:815.46px;width:39.80px;height:39.70px;box-sizing:border-box;background:#fff;border:2px solid #c9c9c9;border-radius:8px;"></div>
<div class="t " style="left:93.47px;top:882.97px;font-size:26px;color:#0b6cc4;-webkit-text-stroke:0.3px;letter-spacing:0.659px;">Orchestration flow for Recurrence Scheduler</div>
<div class="t " style="left:760.95px;top:882.97px;font-size:26px;color:#181818;-webkit-text-stroke:0.3px;letter-spacing:0.409px;">Autolaunched Flow</div>
<div class="t " style="left:1537.37px;top:882.97px;font-size:26px;color:#181818;-webkit-text-stroke:0.3px;letter-spacing:0.881px;">Managed-Installed</div>
<div class="" style="position:absolute;left:1113.90px;top:880.68px;width:34.00px;height:33.80px;box-sizing:border-box;background:#fff;border:2px solid #c9c9c9;border-radius:6.5px;"></div>
<div class="" style="position:absolute;left:1325.90px;top:880.68px;width:34.00px;height:33.80px;box-sizing:border-box;background:#fff;border:2px solid #c9c9c9;border-radius:6.5px;"></div>
<div class="" style="position:absolute;left:2650.30px;top:875.58px;width:39.80px;height:39.70px;box-sizing:border-box;background:#fff;border:2px solid #c9c9c9;border-radius:8px;"></div>
<div class="t " style="left:92.57px;top:943.09px;font-size:26px;color:#0b6cc4;-webkit-text-stroke:0.3px;letter-spacing:0.449px;">Recurrence Schedule Flow</div>
<div class="t " style="left:760.95px;top:943.09px;font-size:26px;color:#181818;-webkit-text-stroke:0.3px;letter-spacing:0.409px;">Autolaunched Flow</div>
<div class="t " style="left:1537.37px;top:943.09px;font-size:26px;color:#181818;-webkit-text-stroke:0.3px;letter-spacing:0.881px;">Managed-Installed</div>
<div class="" style="position:absolute;left:1113.90px;top:940.80px;width:34.00px;height:33.80px;box-sizing:border-box;background:#fff;border:2px solid #c9c9c9;border-radius:6.5px;"></div>
<div class="" style="position:absolute;left:1325.90px;top:940.80px;width:34.00px;height:33.80px;box-sizing:border-box;background:#fff;border:2px solid #c9c9c9;border-radius:6.5px;"></div>
<div class="" style="position:absolute;left:2650.30px;top:935.70px;width:39.80px;height:39.70px;box-sizing:border-box;background:#fff;border:2px solid #c9c9c9;border-radius:8px;"></div>
<div class="t " style="left:92.57px;top:1003.21px;font-size:26px;color:#0b6cc4;-webkit-text-stroke:0.3px;letter-spacing:0.385px;">Reset Password</div>
<div class="t " style="left:759.82px;top:1003.21px;font-size:26px;color:#181818;-webkit-text-stroke:0.3px;letter-spacing:0.222px;">Screen Flow</div>
<div class="t " style="left:1537.37px;top:1003.21px;font-size:26px;color:#181818;-webkit-text-stroke:0.3px;letter-spacing:0.881px;">Managed-Installed</div>
<div class="" style="position:absolute;left:1113.90px;top:1000.92px;width:34.00px;height:33.80px;box-sizing:border-box;background:#fff;border:2px solid #c9c9c9;border-radius:6.5px;"></div>
<div class="" style="position:absolute;left:1325.90px;top:1000.92px;width:34.00px;height:33.80px;box-sizing:border-box;background:#fff;border:2px solid #c9c9c9;border-radius:6.5px;"></div>
<div class="" style="position:absolute;left:2650.30px;top:995.82px;width:39.80px;height:39.70px;box-sizing:border-box;background:#fff;border:2px solid #c9c9c9;border-radius:8px;"></div>
<div class="t " style="left:94.59px;top:1063.33px;font-size:26px;color:#0b6cc4;-webkit-text-stroke:0.3px;letter-spacing:0.675px;">Verify Identity</div>
<div class="t " style="left:759.82px;top:1063.33px;font-size:26px;color:#181818;-webkit-text-stroke:0.3px;letter-spacing:0.222px;">Screen Flow</div>
<div class="t " style="left:1537.37px;top:1063.33px;font-size:26px;color:#181818;-webkit-text-stroke:0.3px;letter-spacing:0.881px;">Managed-Installed</div>
<div class="" style="position:absolute;left:1113.90px;top:1061.04px;width:34.00px;height:33.80px;box-sizing:border-box;background:#fff;border:2px solid #c9c9c9;border-radius:6.5px;"></div>
<div class="" style="position:absolute;left:1325.90px;top:1061.04px;width:34.00px;height:33.80px;box-sizing:border-box;background:#fff;border:2px solid #c9c9c9;border-radius:6.5px;"></div>
<div class="" style="position:absolute;left:2650.30px;top:1055.94px;width:39.80px;height:39.70px;box-sizing:border-box;background:#fff;border:2px solid #c9c9c9;border-radius:8px;"></div>
<svg width="2754" height="1280" viewBox="0 0 2754 1280"><path d="M1122.5,658.3 L1128.5,664.1 L1140.1,651.7" fill="none" stroke="#8a8a8a" stroke-width="4" stroke-linejoin="miter"/><path d="M1334.5,658.3 L1340.5,664.1 L1352.1,651.7" fill="none" stroke="#8a8a8a" stroke-width="4" stroke-linejoin="miter"/><path d="M2659.8,650.2 H2680.2 L2670,663.7Z" fill="#747474"/><path d="M1122.5,718.4 L1128.5,724.2 L1140.1,711.8" fill="none" stroke="#8a8a8a" stroke-width="4" stroke-linejoin="miter"/><path d="M1334.5,718.4 L1340.5,724.2 L1352.1,711.8" fill="none" stroke="#8a8a8a" stroke-width="4" stroke-linejoin="miter"/><path d="M2659.8,710.3 H2680.2 L2670,723.8Z" fill="#747474"/><path d="M1334.5,778.5 L1340.5,784.3 L1352.1,771.9" fill="none" stroke="#8a8a8a" stroke-width="4" stroke-linejoin="miter"/><path d="M2659.8,770.4 H2680.2 L2670,783.9Z" fill="#747474"/><path d="M1334.5,838.7 L1340.5,844.5 L1352.1,832.1" fill="none" stroke="#8a8a8a" stroke-width="4" stroke-linejoin="miter"/><path d="M2659.8,830.6 H2680.2 L2670,844.1Z" fill="#747474"/><path d="M1122.5,898.8 L1128.5,904.6 L1140.1,892.2" fill="none" stroke="#8a8a8a" stroke-width="4" stroke-linejoin="miter"/><path d="M1334.5,898.8 L1340.5,904.6 L1352.1,892.2" fill="none" stroke="#8a8a8a" stroke-width="4" stroke-linejoin="miter"/><path d="M2659.8,890.7 H2680.2 L2670,904.2Z" fill="#747474"/><path d="M1122.5,958.9 L1128.5,964.7 L1140.1,952.3" fill="none" stroke="#8a8a8a" stroke-width="4" stroke-linejoin="miter"/><path d="M2659.8,950.8 H2680.2 L2670,964.3Z" fill="#747474"/><path d="M1122.5,1019.0 L1128.5,1024.8 L1140.1,1012.4" fill="none" stroke="#8a8a8a" stroke-width="4" stroke-linejoin="miter"/><path d="M1334.5,1019.0 L1340.5,1024.8 L1352.1,1012.4" fill="none" stroke="#8a8a8a" stroke-width="4" stroke-linejoin="miter"/><path d="M2659.8,1010.9 H2680.2 L2670,1024.4Z" fill="#747474"/><path d="M1122.5,1079.1 L1128.5,1084.9 L1140.1,1072.5" fill="none" stroke="#8a8a8a" stroke-width="4" stroke-linejoin="miter"/><path d="M1334.5,1079.1 L1340.5,1084.9 L1352.1,1072.5" fill="none" stroke="#8a8a8a" stroke-width="4" stroke-linejoin="miter"/><path d="M2659.8,1071.0 H2680.2 L2670,1084.5Z" fill="#747474"/></svg>
<svg width="2754" height="1280" viewBox="0 0 2754 1280"><ellipse cx="2611.9" cy="219.9" rx="119.2" ry="119.2" fill="none" stroke="#f5280f" stroke-width="5.5"/></svg>
</div></body></html>
